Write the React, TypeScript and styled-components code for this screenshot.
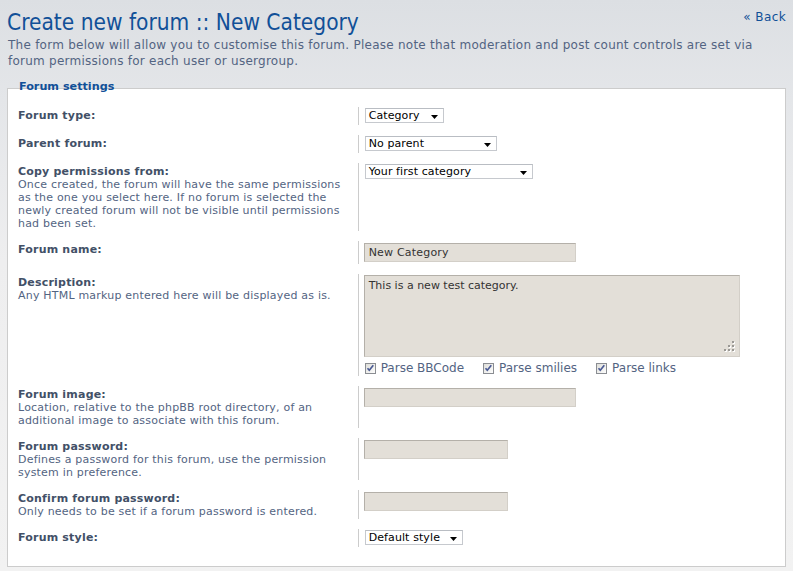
import React from "react";
import styled, { createGlobalStyle } from "styled-components";

const GlobalStyle = createGlobalStyle`
  html, body { margin: 0; padding: 0; }
  body {
    font-family: "DejaVu Sans", Verdana, sans-serif;
    background: linear-gradient(180deg, #dcdfe3 0px, #e4e6e9 100px, #eeeeef 260px, #f2f2f2 571px);
    min-height: 571px;
  }
`;

const Page = styled.div`
  padding: 0 7px;
  min-height: 571px;
  box-sizing: border-box;
`;

const Header = styled.div`
  display: flex;
  justify-content: space-between;
  align-items: flex-start;
`;

const Title = styled.h1`
  margin: 8px 0 0 0;
  font-family: "DejaVu Sans Condensed", "DejaVu Sans", sans-serif;
  font-weight: normal;
  font-size: 22.5px;
  line-height: 28px;
  color: #115098;
`;

const BackLink = styled.a`
  margin-top: 9px;
  font-size: 12px;
  line-height: 16px;
  letter-spacing: 0.4px;
  color: #115098;
  text-decoration: none;
`;

const Intro = styled.p`
  margin: 1px 0 0 1px;
  font-size: 12px;
  line-height: 16px;
  letter-spacing: 0.25px;
  color: #536482;
`;

const Fieldset = styled.div`
  margin-top: 19px;
  border: 1px solid #cccccc;
  background: #ffffff;
  padding: 0 0 19px 0;
`;

const Legend = styled.div`
  margin: -9px 0 0 11px;
  font-size: 11.2px;
  line-height: 14px;
  font-weight: bold;
  color: #115098;
`;

const Rows = styled.div`
  display: flex;
  flex-direction: column;
  gap: 10px;
  margin-top: 13px;
`;

const Row = styled.div`
  display: flex;
  align-items: stretch;
`;

const Dt = styled.div`
  width: 45%;
  box-sizing: border-box;
  padding: 2px 8px 1px 10px;
`;

const Label = styled.div`
  font-size: 11px;
  line-height: 13px;
  font-weight: bold;
  letter-spacing: 0.2px;
  color: #425067;
`;

const Explain = styled.div`
  font-size: 11px;
  line-height: 13px;
  letter-spacing: 0.2px;
  color: #536482;
`;

const Dd = styled.div`
  flex: 1;
  border-left: 1px solid #cccccc;
  padding: 1px 0 2px 5px;
  display: flex;
  flex-direction: column;
  align-items: flex-start;
`;

const SelectBox = styled.div<{ $w: number }>`
  width: ${(p) => p.$w}px;
  height: 15px;
  margin-left: 1px;
  box-sizing: border-box;
  border: 1px solid #c6c9ce;
  border-top-color: #b9bdc3;
  background: #ffffff;
  display: flex;
  align-items: center;
  justify-content: space-between;
  padding: 0 5px 0 3px;
  font-size: 11px;
  letter-spacing: 0.1px;
  color: #000000;
  line-height: 13px;
`;

const Arrow = styled.svg`
  width: 7px;
  height: 4px;
  margin-top: 2px;
  flex: none;
`;

const TextInput = styled.input<{ $w: number }>`
  width: ${(p) => p.$w}px;
  height: 19px;
  box-sizing: border-box;
  margin: 1px 0 0 0;
  padding: 0 4px;
  border: 1px solid;
  border-color: #b4b0a9 #d3cfc8 #d3cfc8 #b4b0a9;
  background: #e3dfd8;
  font-family: "DejaVu Sans", Verdana, sans-serif;
  font-size: 11px;
  letter-spacing: 0.2px;
  color: #333333;
  outline: none;
`;

const TextArea = styled.div`
  position: relative;
  width: 376px;
  height: 82px;
  box-sizing: border-box;
  padding: 3px 4px;
  border: 1px solid;
  border-color: #b4b0a9 #d3cfc8 #d3cfc8 #b4b0a9;
  background: #e3dfd8;
  font-size: 11px;
  line-height: 13px;
  color: #333333;
`;

const Grip = styled.svg`
  position: absolute;
  right: 4px;
  bottom: 4px;
  width: 11px;
  height: 11px;
`;

const Checks = styled.div`
  display: flex;
  align-items: center;
  gap: 19px;
  margin-top: 5px;
  margin-left: 1px;
`;

const Check = styled.label`
  display: flex;
  align-items: center;
  gap: 5px;
  font-size: 12px;
  line-height: 12px;
  color: #536482;
`;

const CheckBoxSvg = styled.svg`
  width: 11px;
  height: 11px;
  flex: none;
`;

const Select = ({ value, w }: { value: string; w: number }) => (
  <SelectBox $w={w}>
    <span>{value}</span>
    <Arrow viewBox="0 0 7 4">
      <path d="M0 0h7L3.5 4z" fill="#000" />
    </Arrow>
  </SelectBox>
);

const CheckBox = () => (
  <CheckBoxSvg viewBox="0 0 11 11">
    <defs>
      <linearGradient id="cbg" x1="0" y1="0" x2="1" y2="1">
        <stop offset="0" stopColor="#dcdcd7" />
        <stop offset="1" stopColor="#ffffff" />
      </linearGradient>
    </defs>
    <rect x="0.5" y="0.5" width="10" height="10" fill="url(#cbg)" stroke="#8a8d92" />
    <path d="M2.5 5.2l1.8 2 4-5" fill="none" stroke="#4a5a94" strokeWidth="1.7" />
  </CheckBoxSvg>
);

const Check3 = ({ label }: { label: string }) => (
  <Check>
    <CheckBox />
    <span>{label}</span>
  </Check>
);

export default function App() {
  return (
    <>
      <GlobalStyle />
      <Page>
        <Header>
          <Title>Create new forum :: New Category</Title>
          <BackLink href="#">« Back</BackLink>
        </Header>
        <Intro>
          The form below will allow you to customise this forum. Please note that moderation and post count controls are set via forum permissions for each user or usergroup.
        </Intro>
        <Fieldset>
          <Legend>Forum settings</Legend>
          <Rows>
            <Row>
              <Dt>
                <Label>Forum type:</Label>
              </Dt>
              <Dd>
                <Select value="Category" w={79} />
              </Dd>
            </Row>
            <Row>
              <Dt>
                <Label>Parent forum:</Label>
              </Dt>
              <Dd>
                <Select value="No parent" w={132} />
              </Dd>
            </Row>
            <Row>
              <Dt>
                <Label>Copy permissions from:</Label>
                <Explain>
                  Once created, the forum will have the same permissions as the one you select here. If no forum is selected the newly created forum will not be visible until permissions had been set.
                </Explain>
              </Dt>
              <Dd>
                <Select value="Your first category" w={168} />
              </Dd>
            </Row>
            <Row>
              <Dt>
                <Label>Forum name:</Label>
              </Dt>
              <Dd>
                <TextInput $w={212} defaultValue="New Category" readOnly />
              </Dd>
            </Row>
            <Row>
              <Dt>
                <Label>Description:</Label>
                <Explain>Any HTML markup entered here will be displayed as is.</Explain>
              </Dt>
              <Dd>
                <TextArea>
                  This is a new test category.
                  <Grip viewBox="0 0 11 11">
                    <g fill="#ffffff">
                      <rect x="9" y="1" width="2" height="2" />
                      <rect x="5" y="5" width="2" height="2" />
                      <rect x="9" y="5" width="2" height="2" />
                      <rect x="1" y="9" width="2" height="2" />
                      <rect x="5" y="9" width="2" height="2" />
                      <rect x="9" y="9" width="2" height="2" />
                    </g>
                    <g fill="#9a9894">
                      <rect x="8" y="0" width="2" height="2" />
                      <rect x="4" y="4" width="2" height="2" />
                      <rect x="8" y="4" width="2" height="2" />
                      <rect x="0" y="8" width="2" height="2" />
                      <rect x="4" y="8" width="2" height="2" />
                      <rect x="8" y="8" width="2" height="2" />
                    </g>
                  </Grip>
                </TextArea>
                <Checks>
                  <Check3 label="Parse BBCode" />
                  <Check3 label="Parse smilies" />
                  <Check3 label="Parse links" />
                </Checks>
              </Dd>
            </Row>
            <Row>
              <Dt>
                <Label>Forum image:</Label>
                <Explain>
                  Location, relative to the phpBB root directory, of an additional image to associate with this forum.
                </Explain>
              </Dt>
              <Dd>
                <TextInput $w={212} readOnly />
              </Dd>
            </Row>
            <Row>
              <Dt>
                <Label>Forum password:</Label>
                <Explain>
                  Defines a password for this forum, use the permission system in preference.
                </Explain>
              </Dt>
              <Dd>
                <TextInput $w={144} readOnly />
              </Dd>
            </Row>
            <Row>
              <Dt>
                <Label>Confirm forum password:</Label>
                <Explain>Only needs to be set if a forum password is entered.</Explain>
              </Dt>
              <Dd>
                <TextInput $w={144} readOnly />
              </Dd>
            </Row>
            <Row>
              <Dt>
                <Label>Forum style:</Label>
              </Dt>
              <Dd>
                <Select value="Default style" w={98} />
              </Dd>
            </Row>
          </Rows>
        </Fieldset>
      </Page>
    </>
  );
}
